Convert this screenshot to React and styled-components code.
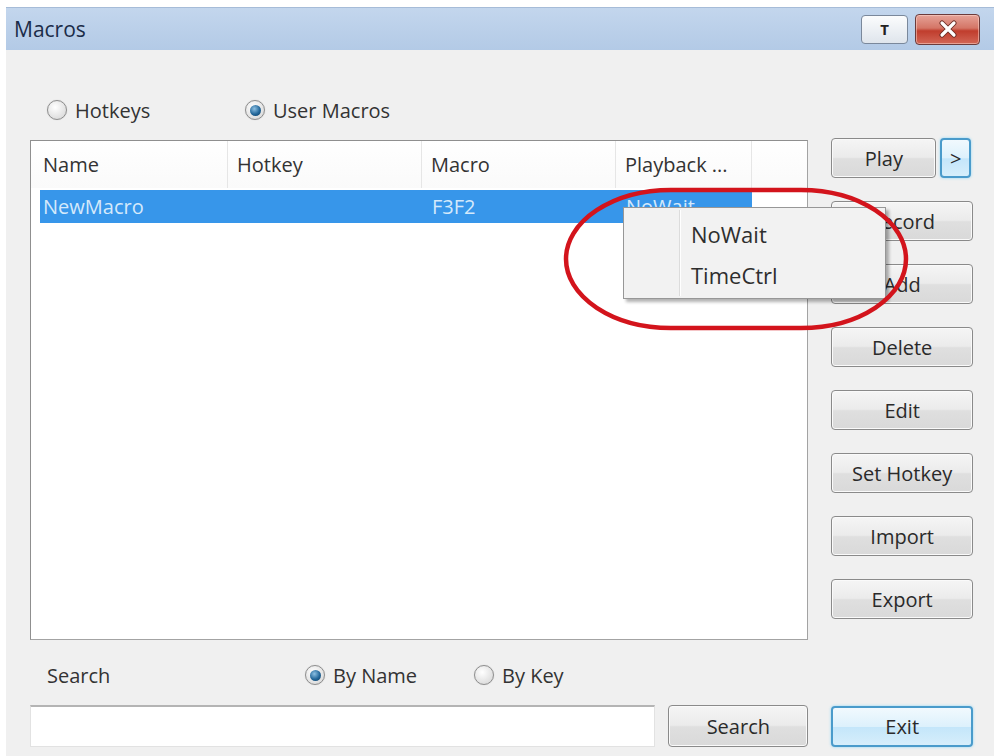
import React from 'react';
import styled, { createGlobalStyle, css } from 'styled-components';

const GlobalStyle = createGlobalStyle`
  body {
    margin: 0;
    background: #ffffff;
    font-family: "Open Sans", "Noto Sans", sans-serif;
    color: #2a2a2a;
  }
`;

const Page = styled.div`
  width: 998px;
  height: 756px;
  box-sizing: border-box;
  padding: 7px 4px 0 6px;
  overflow: hidden;
`;

const Window = styled.div`
  position: relative;
  width: 988px;
  height: 749px;
  background: #f0f0f0;
  display: flex;
  flex-direction: column;
`;

const TitleBar = styled.div`
  height: 43px;
  flex: none;
  display: flex;
  align-items: center;
  justify-content: space-between;
  padding: 0 14px 0 8px;
  background: linear-gradient(#c3d6ed, #b3cae6);
  border-top: 1px solid #a6bcd8;
  box-sizing: border-box;
`;

const Title = styled.div`
  font-size: 21px;
  color: #1b2c48;
`;

const TitleButtons = styled.div`
  display: flex;
  align-items: center;
  gap: 7px;
`;

const CaptionButton = styled.div`
  display: flex;
  align-items: center;
  justify-content: center;
  box-sizing: border-box;
  border-radius: 4px;
  ${p => p.$close ? css`
    width: 65px;
    height: 31px;
    border: 1px solid #6c3b3b;
    background: linear-gradient(#e6a398 0%, #d47566 45%, #c03d2d 55%, #d26656 100%);
    box-shadow: inset 0 0 0 1px rgba(255, 220, 210, 0.5);
  ` : css`
    width: 47px;
    height: 29px;
    border: 1px solid #7a889b;
    background: linear-gradient(#fbfcfd, #dfe5ec);
    font-size: 15px;
    font-weight: 700;
    color: #222;
  `}
`;

const Body = styled.div`
  flex: 1;
  display: flex;
  gap: 23px;
  padding: 0 21px 9px 24px;
`;

const LeftColumn = styled.div`
  width: 780px;
  display: flex;
  flex-direction: column;
`;

const RightColumn = styled.div`
  width: 142px;
  display: flex;
  flex-direction: column;
  gap: 23px;
  padding-top: 88px;
`;

const OptionRow = styled.div`
  display: flex;
  align-items: center;
  height: 22px;
  margin-top: ${p => p.$top}px;
  padding-left: ${p => p.$indent}px;
`;

const Option = styled.label`
  display: flex;
  align-items: center;
  gap: 8px;
  width: ${p => (p.$width ? `${p.$width}px` : 'auto')};
  font-size: 20px;
  color: #333;
`;

const Radio = styled.span`
  width: 20px;
  height: 20px;
  flex: none;
  border-radius: 50%;
  box-sizing: border-box;
  border: 1px solid #8e8e8e;
  background: radial-gradient(circle at 40% 35%, #ffffff, #d2d2d2);
  box-shadow: 0 0 1px #bbbbbb;
  display: flex;
  align-items: center;
  justify-content: center;
  &::after {
    content: '';
    display: ${p => (p.$checked ? 'block' : 'none')};
    width: 11px;
    height: 11px;
    border-radius: 50%;
    background: radial-gradient(circle at 40% 35%, #8cc0e3, #23679a 55%, #0d3b60);
  }
`;

const SearchLabel = styled.span`
  width: 258px;
  font-size: 20px;
  color: #333;
`;

const ListBox = styled.div`
  position: relative;
  height: 500px;
  margin-top: 19px;
  box-sizing: border-box;
  border: 1px solid #a3a3a3;
  border-top-color: #8f8f8f;
  border-left-color: #8f8f8f;
  background: #ffffff;
`;

const HeaderRow = styled.div`
  display: grid;
  grid-template-columns: 197px 194px 194px 136px;
  height: 47px;
  background: linear-gradient(#ffffff, #fafafa);
`;

const HeaderCell = styled.div`
  display: flex;
  align-items: center;
  padding-left: ${p => (p.$first ? 12 : 9)}px;
  border-right: 1px solid #e6e6e6;
  font-size: 20px;
  color: #333;
  white-space: nowrap;
`;

const DataRow = styled.div`
  display: grid;
  grid-template-columns: 188px 194px 194px 136px;
  height: 33px;
  margin: 2px 0 0 9px;
  width: 712px;
  background: ${p => (p.$selected ? '#3796ea' : 'transparent')};
`;

const DataCell = styled.div`
  display: flex;
  align-items: center;
  padding-left: ${p => (p.$first ? 3 : 10)}px;
  font-size: 20px;
  color: ${p => (p.$selected ? '#d4e9fb' : '#333')};
  white-space: nowrap;
`;

const PopupMenu = styled.div`
  position: absolute;
  left: 592px;
  top: 66px;
  width: 263px;
  height: 92px;
  box-sizing: border-box;
  z-index: 5;
  padding-top: 5px;
  background: #f2f2f2;
  border: 1px solid #979797;
  box-shadow: 3px 3px 3px rgba(0, 0, 0, 0.3);
  &::before {
    content: '';
    position: absolute;
    left: 55px;
    top: 2px;
    bottom: 2px;
    width: 1px;
    background: #dcdcdc;
    box-shadow: 1px 0 0 #ffffff;
  }
`;

const MenuItem = styled.div`
  height: 41px;
  display: flex;
  align-items: center;
  padding-left: 67px;
  font-size: 22px;
  color: #2e2e2e;
`;

const SearchBar = styled.div`
  display: flex;
  gap: 13px;
  margin-top: auto;
  height: 42px;
`;

const SearchInput = styled.div`
  flex: 1;
  box-sizing: border-box;
  background: #ffffff;
  border: 1px solid #e2e2e2;
  border-top: 2px solid #b4b4b4;
`;

const Button = styled.div`
  box-sizing: border-box;
  width: ${p => (p.$width ? `${p.$width}px` : '100%')};
  height: ${p => p.$height || 40}px;
  flex: none;
  display: flex;
  align-items: center;
  justify-content: center;
  border-radius: 4px;
  font-size: 20px;
  color: #2a2a2a;
  ${p => p.$default ? css`
    border: 2px solid #4a9bcb;
    background: linear-gradient(#f1f9fe 0%, #ddf1fc 50%, #c4e6fa 52%, #d6eefb 100%);
    box-shadow: 0 0 3px #8fd6f6;
  ` : css`
    border: 1.5px solid #8a8a8a;
    background: linear-gradient(#f5f5f5 0%, #ebebeb 48%, #dfdfdf 52%, #d9d9d9 100%);
    box-shadow: inset 0 0 0 1px #fafafa;
  `}
`;

const PlayRow = styled.div`
  display: flex;
  gap: 4px;
`;

const ExitButton = styled(Button)`
  margin-top: auto;
`;

const Annotation = styled.svg`
  position: absolute;
  left: 557px;
  top: 180px;
  z-index: 10;
  pointer-events: none;
`;

const columns = ['Name', 'Hotkey', 'Macro', 'Playback ...'];
const macros = [{ name: 'NewMacro', hotkey: '', macro: 'F3F2', playback: 'NoWait' }];
const actions = ['Record', 'Add', 'Delete', 'Edit', 'Set Hotkey', 'Import', 'Export'];

export default function App() {
  return (
    <Page>
      <GlobalStyle />
      <Window>
        <TitleBar>
          <Title>Macros</Title>
          <TitleButtons>
            <CaptionButton>T</CaptionButton>
            <CaptionButton $close>
              <svg width="20" height="18" viewBox="0 0 20 18">
                <path d="M4 3 L16 15 M16 3 L4 15" stroke="#6a2a22" strokeWidth="5" strokeLinecap="round" />
                <path d="M4 3 L16 15 M16 3 L4 15" stroke="#ffffff" strokeWidth="3.2" strokeLinecap="round" />
              </svg>
            </CaptionButton>
          </TitleButtons>
        </TitleBar>

        <Body>
          <LeftColumn>
            <OptionRow $top={49} $indent={17}>
              <Option $width={198}><Radio />Hotkeys</Option>
              <Option><Radio $checked />User Macros</Option>
            </OptionRow>

            <ListBox>
              <HeaderRow>
                {columns.map((c, i) => (
                  <HeaderCell key={c} $first={i === 0}>{c}</HeaderCell>
                ))}
              </HeaderRow>
              {macros.map(m => (
                <DataRow key={m.name} $selected>
                  <DataCell $first $selected>{m.name}</DataCell>
                  <DataCell $selected>{m.hotkey}</DataCell>
                  <DataCell $selected>{m.macro}</DataCell>
                  <DataCell $selected>{m.playback}</DataCell>
                </DataRow>
              ))}
              <PopupMenu>
                <MenuItem>NoWait</MenuItem>
                <MenuItem>TimeCtrl</MenuItem>
              </PopupMenu>
            </ListBox>

            <OptionRow $top={24} $indent={17}>
              <SearchLabel>Search</SearchLabel>
              <Option $width={169}><Radio $checked />By Name</Option>
              <Option><Radio />By Key</Option>
            </OptionRow>

            <SearchBar>
              <SearchInput />
              <Button $width={140} $height={42}>Search</Button>
            </SearchBar>
          </LeftColumn>

          <RightColumn>
            <PlayRow>
              <Button $width={105}>Play</Button>
              <Button $width={31} $default>&gt;</Button>
            </PlayRow>
            {actions.map(a => (
              <Button key={a}>{a}</Button>
            ))}
            <ExitButton $default $height={41}>Exit</ExitButton>
          </RightColumn>
        </Body>

        <Annotation width="346" height="144" viewBox="0 0 346 144">
          <rect x="3" y="3" width="340" height="138" rx="105" ry="69"
            fill="none" stroke="#d3141c" strokeWidth="4.5" />
        </Annotation>
      </Window>
    </Page>
  );
}
